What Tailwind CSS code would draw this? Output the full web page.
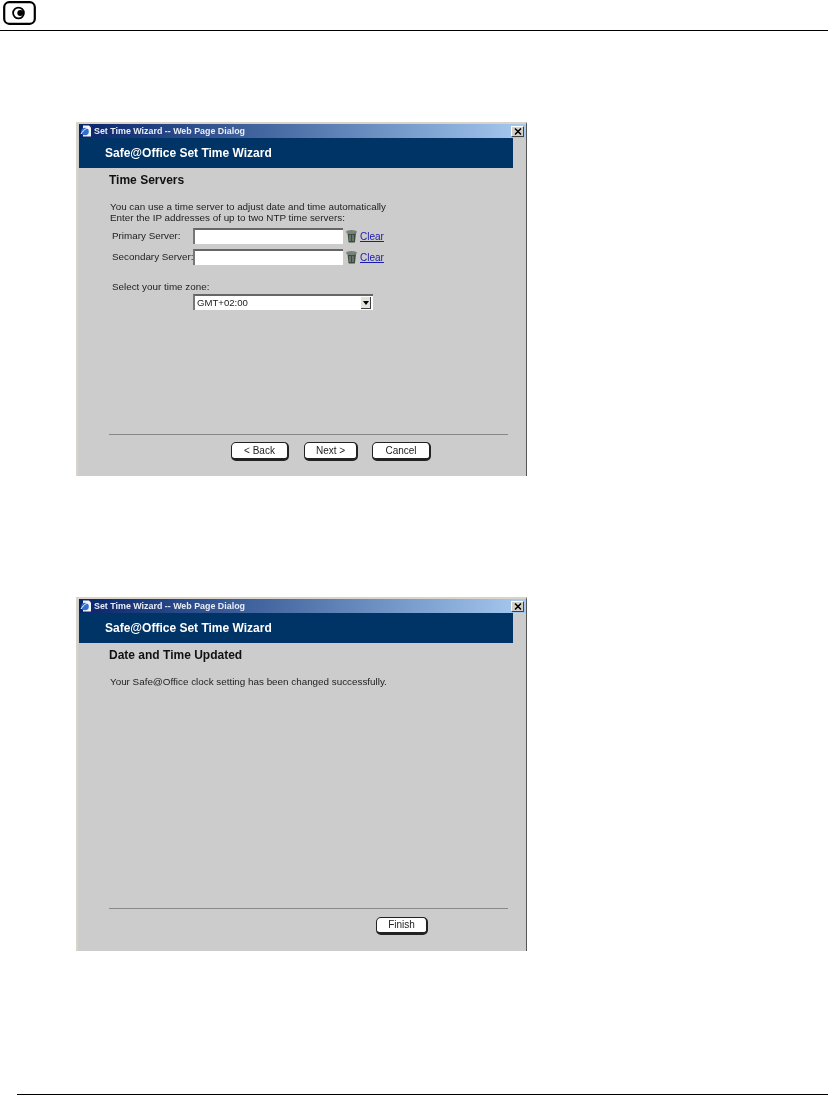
<!DOCTYPE html>
<html lang="en">
<head>
    <meta charset="UTF-8">
    <title>Set Time Wizard</title>
    <script src="https://cdn.jsdelivr.net/npm/@tailwindcss/browser@4"></script>
</head>
<body class="bg-white font-['Liberation_Sans',Arial,sans-serif] text-[#222]">
<div class="w-[828px] h-[1095px] flex flex-col overflow-hidden">
    <!-- Page header -->
    <div class="h-[31px] shrink-0 border-b border-black pl-[3px] pt-px">
        <svg width="33" height="24" viewBox="0 0 33 24" fill="none">
            <rect x="1.200" y="1.200" width="30.600" height="21.600" rx="5" stroke="#000" stroke-width="2.200"/>
            <circle cx="15.500" cy="12" r="5.400" stroke="#000" stroke-width="1.800"/>
            <circle cx="17.300" cy="12" r="3" fill="#000"/>
        </svg>
    </div>

    <!-- Dialog 1: Time Servers -->
    <div class="mt-[91px] ml-[76px] w-[451px] h-[354px] shrink-0 bg-[#cccccc] border-t-2 border-l-2 border-t-[#d8d4c8] border-l-[#d8d4c8] border-r border-r-[#555] pl-px flex flex-col blur-[0.3px]">
        <div class="h-[14px] shrink-0 flex items-center justify-between bg-gradient-to-r from-[#0a246a] to-[#a6caf0] pl-px pr-[2px]">
            <div class="flex items-center gap-[2px]">
                <svg width="12" height="12" viewBox="0 0 12 12"><path d="M3 0.500h6l2 2v9H3z" fill="#f4f4f4"/><circle cx="5" cy="6.500" r="3.800" fill="#2f6fd0"/><path d="M1 9C4 4 7 3 9 3" stroke="#fff" stroke-width="1" fill="none"/></svg>
                <span class="text-[8.900px] leading-none font-bold text-[#e8edf5]">Set Time Wizard -- Web Page Dialog</span>
            </div>
            <div class="w-[13px] h-[11px] bg-[#d4d0c8] border-t border-l border-t-white border-l-white border-r border-b border-r-[#404040] border-b-[#404040] flex items-center justify-center">
                <svg width="8" height="7" viewBox="0 0 8 7"><path d="M1 0.500L7 6.500M7 0.500L1 6.500" stroke="#000" stroke-width="1.500"/></svg>
            </div>
        </div>
        <div class="h-[30px] shrink-0 w-[434px] bg-[#003366] flex items-center pl-[26px] text-[12px] font-bold text-white">Safe@Office Set Time Wizard</div>
        <div class="pl-[30px] pt-[6px] flex-1 flex flex-col">
            <h2 class="text-[12px] leading-[13px] font-bold text-[#111]">Time Servers</h2>
            <p class="mt-[14px] pl-px text-[9.850px] leading-[11px]">You can use a time server to adjust date and time automatically<br>Enter the IP addresses of up to two NTP time servers:</p>
            <div class="mt-[5px] flex flex-col gap-[5px]">
                <div class="flex items-center h-[16px]">
                    <span class="w-[84px] shrink-0 whitespace-nowrap pl-[3px] text-[9.850px]">Primary Server:</span>
                    <div class="w-[150px] h-[16px] bg-white border-t-2 border-l-2 border-t-[#666] border-l-[#777]"></div>
                    <svg class="ml-[2px]" width="13" height="14" viewBox="0 0 13 14"><path d="M2.500 3.500h8.500l-1 9.500a1 1 0 0 1-1 .5H4.500a1 1 0 0 1-1-.5z" fill="#3f4a40"/><ellipse cx="6.500" cy="3" rx="5.500" ry="2" fill="#77847a"/><path d="M5 6v6M8 6v6" stroke="#8e9c90"/></svg>
                    <a class="ml-[2px] text-[10px] text-[#1a1aa8] underline">Clear</a>
                </div>
                <div class="flex items-center h-[16px]">
                    <span class="w-[84px] shrink-0 whitespace-nowrap pl-[3px] text-[9.850px]">Secondary Server:</span>
                    <div class="w-[150px] h-[16px] bg-white border-t-2 border-l-2 border-t-[#666] border-l-[#777]"></div>
                    <svg class="ml-[2px]" width="13" height="14" viewBox="0 0 13 14"><path d="M2.500 3.500h8.500l-1 9.500a1 1 0 0 1-1 .5H4.500a1 1 0 0 1-1-.5z" fill="#3f4a40"/><ellipse cx="6.500" cy="3" rx="5.500" ry="2" fill="#77847a"/><path d="M5 6v6M8 6v6" stroke="#8e9c90"/></svg>
                    <a class="ml-[2px] text-[10px] text-[#1a1aa8] underline">Clear</a>
                </div>
            </div>
            <p class="mt-[16px] pl-[3px] text-[9.850px] leading-[11px]">Select your time zone:</p>
            <div class="mt-[2px] ml-[84px] w-[180px] h-[16px] bg-white border-t-2 border-l-2 border-t-[#666] border-l-[#777] flex items-center justify-between pl-[2px] pr-[2px]">
                <span class="text-[9.600px]">GMT+02:00</span>
                <div class="w-[10px] h-[12px] bg-[#e4e2dc] border-r border-b border-r-[#404040] border-b-[#404040] flex items-center justify-center">
                    <svg width="6" height="4" viewBox="0 0 6 4"><path d="M0 0h6L3 4z" fill="#000"/></svg>
                </div>
            </div>
            <div class="mt-auto w-[399px] border-t border-[#888]"></div>
            <div class="h-[41px] shrink-0 pt-[7px] flex pl-[122px]">
                <button class="w-[58px] h-[19px] bg-white border border-[#222] border-r-2 border-b-[3px] rounded-[5px] text-[10px] leading-none">&lt; Back</button>
                <button class="ml-[15px] w-[54px] h-[19px] bg-white border border-[#222] border-r-2 border-b-[3px] rounded-[5px] text-[10px] leading-none">Next &gt;</button>
                <button class="ml-[14px] w-[59px] h-[19px] bg-white border border-[#222] border-r-2 border-b-[3px] rounded-[5px] text-[10px] leading-none">Cancel</button>
            </div>
        </div>
    </div>

    <!-- Dialog 2: Date and Time Updated -->
    <div class="mt-[121px] ml-[76px] w-[451px] h-[354px] shrink-0 bg-[#cccccc] border-t-2 border-l-2 border-t-[#d8d4c8] border-l-[#d8d4c8] border-r border-r-[#555] pl-px flex flex-col blur-[0.3px]">
        <div class="h-[14px] shrink-0 flex items-center justify-between bg-gradient-to-r from-[#0a246a] to-[#a6caf0] pl-px pr-[2px]">
            <div class="flex items-center gap-[2px]">
                <svg width="12" height="12" viewBox="0 0 12 12"><path d="M3 0.500h6l2 2v9H3z" fill="#f4f4f4"/><circle cx="5" cy="6.500" r="3.800" fill="#2f6fd0"/><path d="M1 9C4 4 7 3 9 3" stroke="#fff" stroke-width="1" fill="none"/></svg>
                <span class="text-[8.900px] leading-none font-bold text-[#e8edf5]">Set Time Wizard -- Web Page Dialog</span>
            </div>
            <div class="w-[13px] h-[11px] bg-[#d4d0c8] border-t border-l border-t-white border-l-white border-r border-b border-r-[#404040] border-b-[#404040] flex items-center justify-center">
                <svg width="8" height="7" viewBox="0 0 8 7"><path d="M1 0.500L7 6.500M7 0.500L1 6.500" stroke="#000" stroke-width="1.500"/></svg>
            </div>
        </div>
        <div class="h-[30px] shrink-0 w-[434px] bg-[#003366] flex items-center pl-[26px] text-[12px] font-bold text-white">Safe@Office Set Time Wizard</div>
        <div class="pl-[30px] pt-[6px] flex-1 flex flex-col">
            <h2 class="text-[12px] leading-[13px] font-bold text-[#111]">Date and Time Updated</h2>
            <p class="mt-[14px] pl-px text-[9.850px] leading-[11px]">Your Safe@Office clock setting has been changed successfully.</p>
            <div class="mt-auto w-[399px] border-t border-[#888]"></div>
            <div class="h-[42px] shrink-0 pt-[8px] flex pl-[267px]">
                <button class="w-[52px] h-[18px] bg-white border border-[#222] border-r-2 border-b-[3px] rounded-[5px] text-[10px] leading-none">Finish</button>
            </div>
        </div>
    </div>

    <!-- Page footer rule -->
    <div class="mt-[143px] ml-[17px] border-t border-black"></div>
</div>
</body>
</html>
